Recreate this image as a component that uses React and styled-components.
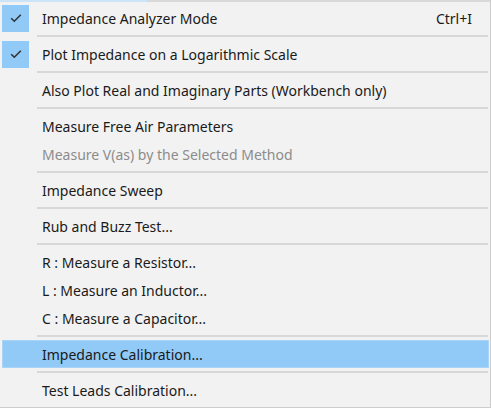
import React from "react";
import styled, { createGlobalStyle } from "styled-components";

const Global = createGlobalStyle`
  html, body {
    margin: 0;
    padding: 0;
    background: #f2f2f2;
  }
  body {
    font-family: "Noto Sans", "Open Sans", sans-serif;
  }
`;

const Menu = styled.div`
  width: 491px;
  height: 408px;
  box-sizing: border-box;
  background: #f2f2f2;
  border-right: 1px solid #cccccc;
  border-bottom: 1px solid #cccccc;
  display: flex;
  flex-direction: column;
`;

const TopEdge = styled.div`
  display: flex;
  height: 2px;
  background: #d9d9d9;
  margin-bottom: 2px;
`;

const TopTab = styled.div`
  width: 147px;
  background: #cce4f7;
`;

const Item = styled.div`
  display: flex;
  align-items: center;
  height: 28px;
  margin: 0 1px 0 2px;
  box-sizing: border-box;
  background: ${({ $active }) => ($active ? "#91c9f7" : "transparent")};
  border: 1px solid ${({ $active }) => ($active ? "#a9d4f8" : "transparent")};
  color: ${({ $disabled }) => ($disabled ? "#8c8c8c" : "#1a1a1a")};
  font-size: 14px;
`;

const CheckCell = styled.div`
  width: 27px;
  height: 27px;
  margin-left: -1px;
  flex: none;
  display: flex;
  align-items: center;
  justify-content: center;
  background: ${({ $on }) => ($on ? "#91c9f7" : "transparent")};
`;

const Label = styled.span`
  flex: 1;
  margin-left: 13px;
  white-space: nowrap;
`;

const Shortcut = styled.span`
  margin-right: 16px;
`;

const Separator = styled.div`
  height: 8px;
  display: flex;
  align-items: center;
  padding-left: 37px;
  padding-right: 2px;
  &::after {
    content: "";
    flex: 1;
    height: 2px;
    background: #d8d8d8;
  }
`;

const Check = () => (
  <svg width="12" height="10" viewBox="0 0 12 10">
    <path d="M1.2 5.2 L4.3 8.2 L10.8 1.8" fill="none" stroke="#333" strokeWidth="1.6" />
  </svg>
);

const groups = [
  [
    { label: "Impedance Analyzer Mode", checked: true, shortcut: "Ctrl+I" },
  ],
  [{ label: "Plot Impedance on a Logarithmic Scale", checked: true }],
  [{ label: "Also Plot Real and Imaginary Parts (Workbench only)" }],
  [
    { label: "Measure Free Air Parameters" },
    { label: "Measure V(as) by the Selected Method", disabled: true },
  ],
  [{ label: "Impedance Sweep" }],
  [{ label: "Rub and Buzz Test..." }],
  [
    { label: "R : Measure a Resistor..." },
    { label: "L : Measure an Inductor..." },
    { label: "C : Measure a Capacitor..." },
  ],
  [{ label: "Impedance Calibration...", active: true }],
  [{ label: "Test Leads Calibration..." }],
];

export default function App() {
  return (
    <>
      <Global />
      <Menu>
        <TopEdge>
          <TopTab />
        </TopEdge>
        {groups.map((group, gi) => (
          <React.Fragment key={gi}>
            {gi > 0 && <Separator />}
            {group.map((item) => (
              <Item key={item.label} $active={item.active} $disabled={item.disabled}>
                <CheckCell $on={item.checked}>{item.checked && <Check />}</CheckCell>
                <Label>{item.label}</Label>
                {item.shortcut && <Shortcut>{item.shortcut}</Shortcut>}
              </Item>
            ))}
          </React.Fragment>
        ))}
      </Menu>
    </>
  );
}
